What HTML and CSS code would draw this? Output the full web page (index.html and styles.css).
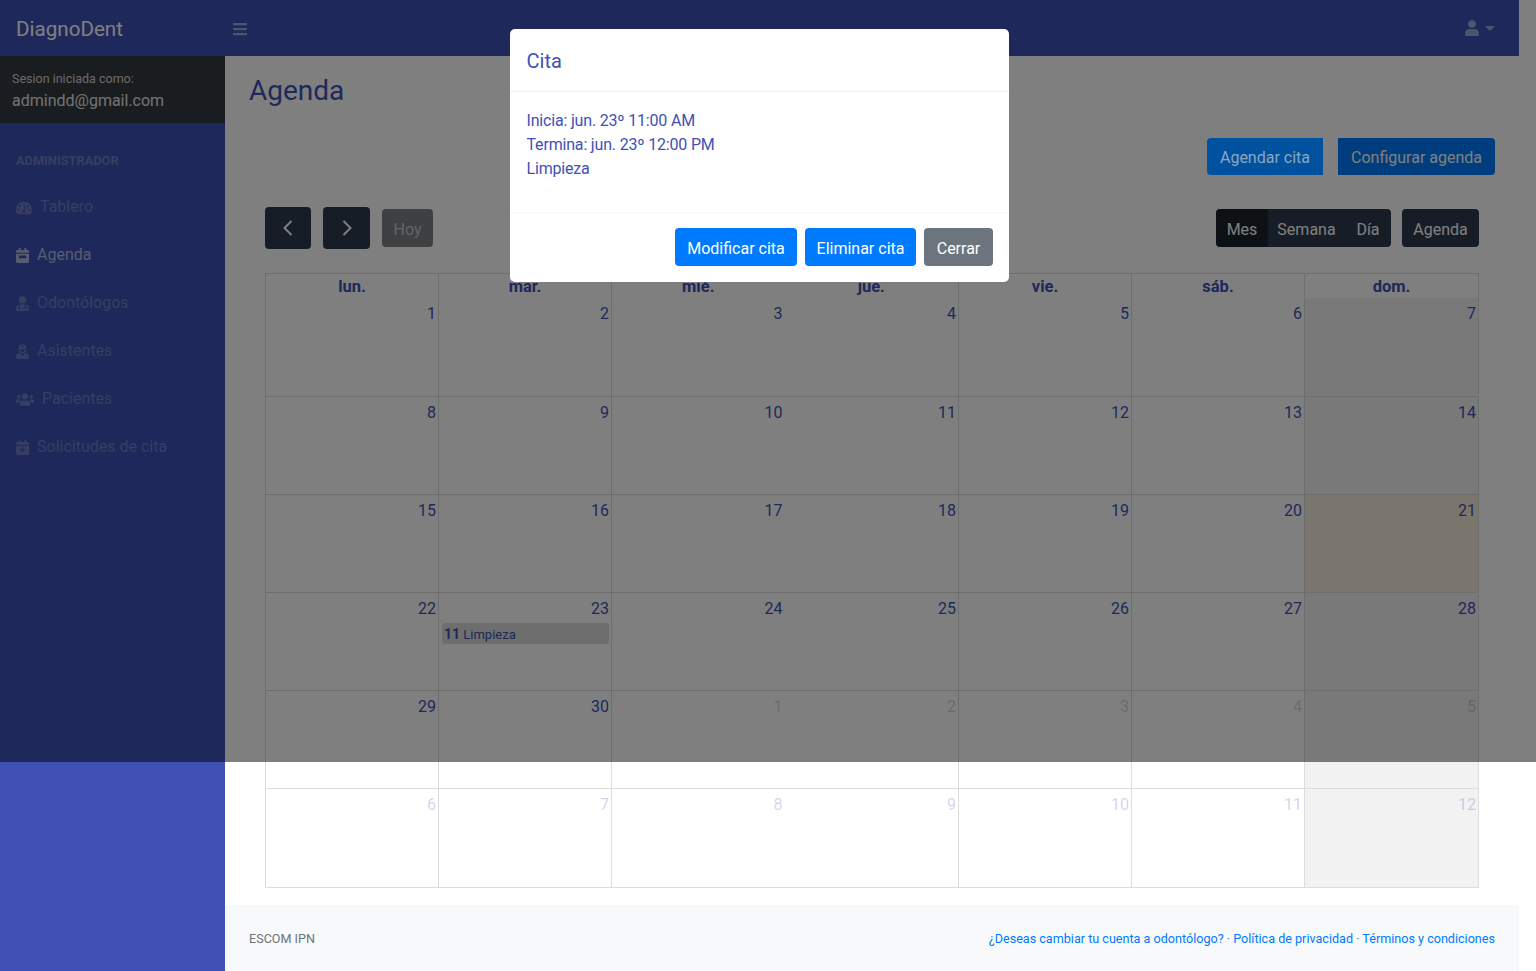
FILE: index.html
```html
<!DOCTYPE html>
<html lang="es">
<head>
  <meta charset="UTF-8" />
  <title>DiagnoDent - Agenda</title>
  <link rel="stylesheet" href="styles.css">
</head>
<body>
  <div class="page">
    <nav class="topnav">
      <a class="brand" href="#">DiagnoDent</a>
      <button class="menu-toggle">
        <svg class="icon" viewBox="0 0 448 512"><path d="M16 132h416c8.837 0 16-7.163 16-16V76c0-8.837-7.163-16-16-16H16C7.163 60 0 67.163 0 76v40c0 8.837 7.163 16 16 16zm0 160h416c8.837 0 16-7.163 16-16v-40c0-8.837-7.163-16-16-16H16c-8.837 0-16 7.163-16 16v40c0 8.837 7.163 16 16 16zm0 160h416c8.837 0 16-7.163 16-16v-40c0-8.837-7.163-16-16-16H16c-8.837 0-16 7.163-16 16v40c0 8.837 7.163 16 16 16z"/></svg>
      </button>
      <div class="user-menu">
        <svg class="icon" viewBox="0 0 448 512"><path d="M224 256c70.7 0 128-57.3 128-128S294.7 0 224 0 96 57.3 96 128s57.3 128 128 128zm89.6 32h-16.7c-22.2 10.2-46.9 16-72.9 16s-50.6-5.8-72.9-16h-16.7C60.2 288 0 348.2 0 422.4V464c0 26.5 21.5 48 48 48h352c26.5 0 48-21.5 48-48v-41.6c0-74.2-60.2-134.4-134.4-134.4z"/></svg>
        <span class="caret"></span>
      </div>
    </nav>

    <div class="layout">
      <aside class="sidebar">
        <div class="session">
          <div class="session-label">Sesion iniciada como:</div>
          <div class="session-mail">admindd@gmail.com</div>
        </div>
        <div class="side-heading">ADMINISTRADOR</div>
        <a class="side-link" href="#">
          <svg class="side-icon dial" viewBox="0 0 576 512"><path fill-rule="evenodd" d="M288 48C129 48 0 177 0 336c0 53 14 102 39 144 6 10 16 16 28 16h442c12 0 22-6 28-16 25-42 39-91 39-144C576 177 447 48 288 48zm0 64a32 32 0 1 1 0 64 32 32 0 0 1 0-64zM96 368a32 32 0 1 1 0-64 32 32 0 0 1 0 64zm48-128a32 32 0 1 1 0-64 32 32 0 0 1 0 64zm192 200H240c-6-8-16-40-6-60 8-16 26-26 42-24l52-150c3-8 12-13 21-10s13 12 10 20l-52 152c12 12 24 46 29 72zm96-200a32 32 0 1 1 0-64 32 32 0 0 1 0 64zm48 128a32 32 0 1 1 0-64 32 32 0 0 1 0 64z"/></svg>
          Tablero
        </a>
        <a class="side-link active" href="#">
          <svg class="side-icon" viewBox="0 0 448 512"><path fill-rule="evenodd" d="M12 192h424c6.6 0 12 5.4 12 12v260c0 26.5-21.5 48-48 48H48c-26.5 0-48-21.5-48-48V204c0-6.6 5.4-12 12-12zm84 64v96h256v-96zm352-108v-36c0-26.5-21.5-48-48-48h-48V12c0-6.6-5.4-12-12-12h-40c-6.6 0-12 5.4-12 12v52H160V12c0-6.6-5.4-12-12-12h-40c-6.6 0-12 5.4-12 12v52H48C21.5 64 0 85.5 0 112v36c0 6.6 5.4 12 12 12h424c6.6 0 12-5.4 12-12z"/></svg>
          Agenda
        </a>
        <a class="side-link" href="#">
          <svg class="side-icon" viewBox="0 0 448 512"><path fill-rule="evenodd" d="M224 256c70.7 0 128-57.3 128-128S294.7 0 224 0 96 57.3 96 128s57.3 128 128 128zM104 296C44 308 0 360 0 422v42c0 26.500 21.500 48 48 48h352c26.500 0 48-21.500 48-48v-42c0-62-44-114-104-126v60c28 8 48 32 48 62v34l-40 10-8-30 16-4v-10c0-18-14-32-32-32s-32 14-32 32v10l16 4-8 30-40-10v-34c0-30 20-54 48-62v-58c-16-2-32-4-48-4h-84c-16 0-32 2-48 4v86a40 40 0 1 1-32 0z"/></svg>
          Odontólogos
        </a>
        <a class="side-link" href="#">
          <svg class="side-icon" viewBox="0 0 448 512"><path fill-rule="evenodd" d="M96 64l128-64 128 64v128c0 70.700-57.300 128-128 128S96 262.700 96 192zm48 128c0 44 36 80 80 80s80-36 80-80v-16H144zm64-128v-24h32v24h24v32h-24v24h-32V96h-24V64zM110 320h34l80 96 80-96h34c62 0 110 48 110 108v36c0 26.500-21.500 48-48 48H48c-26.500 0-48-21.500-48-48v-36c0-60 48-108 110-108z"/></svg>
          Asistentes
        </a>
        <a class="side-link" href="#">
          <svg class="side-icon wide" viewBox="0 0 640 512"><path d="M96 224c35.300 0 64-28.700 64-64s-28.700-64-64-64-64 28.700-64 64 28.700 64 64 64zm448 0c35.300 0 64-28.700 64-64s-28.700-64-64-64-64 28.700-64 64 28.700 64 64 64zm32 32h-64c-17.600 0-33.500 7.100-45.100 18.600 40.300 22.100 68.900 62 75.100 109.400h66c17.700 0 32-14.300 32-32v-32c0-35.300-28.700-64-64-64zm-256 0c61.900 0 112-50.100 112-112S381.900 32 320 32 208 82.100 208 144s50.100 112 112 112zm76.800 32h-8.300c-20.800 10-43.900 16-68.500 16s-47.600-6-68.500-16h-8.300C179.600 288 128 339.600 128 403.200V432c0 26.500 21.500 48 48 48h288c26.500 0 48-21.500 48-48v-28.800c0-63.600-51.600-115.200-115.200-115.200zm-223.700-13.400C161.500 263.100 145.600 256 128 256H64c-35.300 0-64 28.700-64 64v32c0 17.700 14.300 32 32 32h65.900c6.300-47.400 34.900-87.300 75.200-109.400z"/></svg>
          Pacientes
        </a>
        <a class="side-link" href="#">
          <svg class="side-icon" viewBox="0 0 448 512"><path fill-rule="evenodd" d="M12 192h424c6.600 0 12 5.400 12 12v260c0 26.500-21.500 48-48 48H48c-26.500 0-48-21.500-48-48V204c0-6.600 5.400-12 12-12zm184 64v56h-56v48h56v56h56v-56h56v-48h-56v-56zm252-108v-36c0-26.500-21.500-48-48-48h-48V12c0-6.600-5.400-12-12-12h-40c-6.600 0-12 5.400-12 12v52H160V12c0-6.600-5.400-12-12-12h-40c-6.600 0-12 5.400-12 12v52H48C21.500 64 0 85.500 0 112v36c0 6.600 5.400 12 12 12h424c6.600 0 12-5.400 12-12z"/></svg>
          Solicitudes de cita
        </a>
      </aside>

      <div class="content">
        <main class="main">
          <h1 class="title">Agenda</h1>
          <div class="actions">
            <a class="btn action-one" href="#">Agendar cita</a>
            <a class="btn action-two" href="#">Configurar agenda</a>
          </div>

          <div class="calendar">
            <div class="toolbar">
              <div class="toolbar-left">
                <button class="btn btn-dark btn-arrow btn-prev">
                  <svg class="chevron" viewBox="0 0 12 18"><path d="M9.500 2 L2.500 9 L9.500 16"/></svg>
                </button>
                <button class="btn btn-dark btn-arrow">
                  <svg class="chevron" viewBox="0 0 12 18"><path d="M2.500 2 L9.500 9 L2.500 16"/></svg>
                </button>
                <button class="btn btn-today">Hoy</button>
              </div>
              <div class="toolbar-right">
                <div class="btn-group">
                  <button class="btn btn-dark view-mes">Mes</button>
                  <button class="btn btn-dark view-semana">Semana</button>
                  <button class="btn btn-dark view-dia">Día</button>
                </div>
                <button class="btn btn-dark view-agenda">Agenda</button>
              </div>
            </div>

            <table class="month">
              <thead>
                <tr>
                  <th>lun.</th><th>mar.</th><th class="no-right">mié.</th><th class="no-line">jue.</th><th>vie.</th><th>sáb.</th><th class="last-col">dom.</th>
                </tr>
              </thead>
              <tbody>
                <tr>
                  <td>1</td><td>2</td><td class="no-right">3</td><td class="no-line">4</td><td>5</td><td>6</td><td class="weekend">7</td>
                </tr>
                <tr>
                  <td>8</td><td>9</td><td class="no-right">10</td><td class="no-line">11</td><td>12</td><td>13</td><td class="weekend">14</td>
                </tr>
                <tr>
                  <td>15</td><td>16</td><td class="no-right">17</td><td class="no-line">18</td><td>19</td><td>20</td><td class="today">21</td>
                </tr>
                <tr>
                  <td>22</td>
                  <td>23<div class="event"><b>11</b> Limpieza</div></td>
                  <td class="no-right">24</td><td class="no-line">25</td><td>26</td><td>27</td><td class="weekend">28</td>
                </tr>
                <tr>
                  <td>29</td><td>30</td><td class="no-right off">1</td><td class="no-line off">2</td><td class="off">3</td><td class="off">4</td><td class="weekend off">5</td>
                </tr>
                <tr>
                  <td class="off">6</td><td class="off">7</td><td class="no-right off">8</td><td class="no-line off">9</td><td class="off">10</td><td class="off">11</td><td class="weekend off">12</td>
                </tr>
              </tbody>
            </table>
          </div>
        </main>

        <footer class="footer">
          <span class="footer-left">ESCOM IPN</span>
          <span class="footer-right">
            <a href="#">¿Deseas cambiar tu cuenta a odontólogo?</a> ·
            <a href="#">Política de privacidad</a> ·
            <a href="#">Términos y condiciones</a>
          </span>
        </footer>
      </div>
    </div>
  </div>

  <!-- Modal -->
  <div class="backdrop"></div>
  <div class="modal">
    <div class="modal-header">Cita</div>
    <div class="modal-body">
      <div>Inicia: jun. 23º 11:00 AM</div>
      <div>Termina: jun. 23º 12:00 PM</div>
      <div>Limpieza</div>
    </div>
    <div class="modal-footer">
      <button class="btn btn-primary btn-modify">Modificar cita</button>
      <button class="btn btn-primary btn-delete">Eliminar cita</button>
      <button class="btn btn-secondary">Cerrar</button>
    </div>
  </div>
</body>
</html>
```

FILE: styles.css
```css
* {
  box-sizing: border-box;
}
body {
  margin: 0;
  font-family: Roboto, "Open Sans", sans-serif;
  font-size: 16px;
  line-height: 24px;
  color: #3f51b5;
  background: #fff;
}
a {
  text-decoration: none;
}
.page {
  width: 1519px;
}
.icon {
  display: block;
  fill: currentColor;
}

/* Top bar */
.topnav {
  display: flex;
  align-items: center;
  height: 56px;
  background: #3f51b5;
}
.brand {
  width: 225px;
  padding: 2px 0 0 16px;
  font-size: 20.600px;
  color: #fff;
}
.menu-toggle {
  padding: 1px 0 0;
  margin-left: 8px;
  border: 0;
  background: none;
  color: rgba(255, 255, 255, 0.5);
}
.menu-toggle .icon {
  width: 14px;
  height: 16px;
}
.user-menu {
  display: flex;
  align-items: center;
  gap: 6px;
  margin-left: auto;
  margin-right: 24px;
  color: rgba(255, 255, 255, 0.5);
}
.user-menu .icon {
  width: 14px;
  height: 16px;
}
.caret {
  border-top: 5px solid;
  border-left: 5px solid transparent;
  border-right: 5px solid transparent;
}

/* Sidebar */
.layout {
  display: flex;
  min-height: 915px;
}
.sidebar {
  width: 225px;
  flex-shrink: 0;
  background: #3f51b5;
}
.session {
  height: 67px;
  padding: 14px 12px 0;
  background: #343a40;
  color: #e4e4e4;
}
.session-label {
  font-size: 12.500px;
  line-height: 17px;
  color: #d4d4d4;
}
.session-mail {
  margin-top: 2px;
  line-height: 24px;
}
.side-heading {
  padding: 29px 16px 0;
  height: 59px;
  font-size: 12.800px;
  line-height: 18px;
  font-weight: bold;
  color: rgba(255, 255, 255, 0.25);
}
.side-link {
  display: flex;
  align-items: center;
  gap: 8px;
  height: 48px;
  padding: 2px 0 0 16px;
  color: rgba(255, 255, 255, 0.25);
}
.side-link.active {
  color: rgba(255, 255, 255, 0.6);
}
.side-icon {
  width: 13px;
  height: 15px;
  fill: currentColor;
}
.side-icon.dial {
  width: 16px;
}
.side-icon.wide {
  width: 18px;
}

/* Main column */
.content {
  flex: 1;
  display: flex;
  flex-direction: column;
}
.main {
  flex: 1;
  padding: 0 24px;
}
.title {
  margin: 16px 0 0;
  font-size: 28px;
  line-height: 38px;
  font-weight: 400;
}
.actions {
  display: flex;
  justify-content: flex-end;
  gap: 15px;
  margin-top: 28px;
}
.btn {
  display: inline-block;
  height: 38px;
  padding: 4px 12px 0;
  font: inherit;
  border: 1px solid transparent;
  border-radius: 4px;
  color: #fff;
  cursor: pointer;
}
.actions .btn {
  height: 37px;
  padding-top: 7px;
}
/* sits over the backdrop: this button was caught mid hover fade */
.action-one {
  position: relative;
  z-index: 1;
  background: #0052a0;
  color: #8ba6bf;
  border-radius: 4px 0 0 4px;
}
.action-two {
  background: #007bff;
  border-radius: 0 4px 4px 0;
}

/* Calendar */
.calendar {
  padding: 0 16px;
}
.toolbar {
  display: flex;
  justify-content: space-between;
  align-items: center;
  height: 42px;
  margin-top: 32px;
}
.toolbar-left,
.toolbar-right {
  display: flex;
  align-items: center;
}
.toolbar-left {
  gap: 12px;
}
.toolbar-right {
  gap: 11px;
}
.btn-dark {
  background: #2d3b4d;
  padding: 4px 10px 0;
}
.btn-arrow {
  width: 47px;
  height: 42px;
  padding: 0;
  display: flex;
  align-items: center;
  justify-content: center;
}
.btn-prev {
  width: 46px;
}
.chevron {
  width: 12px;
  height: 18px;
  fill: none;
  stroke: #fff;
  stroke-width: 2;
}
.btn-today {
  width: 51px;
  padding: 4px 0 0;
  background: #7d8084;
  color: #c8c8c8;
}
.btn-group {
  display: flex;
}
.btn-group .btn {
  border-radius: 0;
  padding: 4px 0 0;
}
.view-mes {
  width: 52px;
  background: #1a2228;
}
.btn-group .view-mes {
  border-radius: 4px 0 0 4px;
}
.view-semana {
  width: 77px;
}
.view-dia {
  width: 46px;
}
.btn-group .view-dia {
  border-radius: 0 4px 4px 0;
}
.view-agenda {
  width: 77px;
  padding: 4px 0 0;
}
.month {
  width: 1214px;
  margin-top: 24px;
  border-collapse: collapse;
  table-layout: fixed;
}
.month th {
  width: 173px;
  height: 24px;
  padding: 2px 0 0;
  border: 1px solid #ddd;
  border-bottom: 0;
  font-size: 16.500px;
  line-height: 22px;
  font-weight: bold;
  text-align: center;
}
.month th.no-line {
  width: 174px;
}
.month th.last-col {
  width: auto;
}
.month td {
  height: 98px;
  padding: 3px 2px 0 3px;
  border: 1px solid #ddd;
  line-height: 26px;
  text-align: right;
  vertical-align: top;
}
.month .no-line {
  border-left: 0;
}
.month .no-right {
  border-right: 0;
}
.month tbody tr:first-child td {
  border-top: 0;
}
.month tbody tr:last-child td {
  height: 99px;
}
.month td.weekend {
  background: #f2f2f2;
}
.month td.today {
  background: #f5eddc;
}
.month td.off {
  color: rgba(63, 81, 181, 0.25);
}
.event {
  height: 21px;
  margin-top: 1px;
  padding: 1px 0 0 2px;
  background: #dcdcdc;
  border-radius: 3px;
  font-size: 13px;
  line-height: 20px;
  text-align: left;
}
.event b {
  font-size: 14px;
}

/* Footer */
.footer {
  display: flex;
  justify-content: space-between;
  align-items: center;
  height: 66px;
  margin-top: 17px;
  padding: 2px 24px 0;
  background: #f8f9fa;
  font-size: 12.600px;
}
.footer-left {
  color: #6c757d;
}
.footer-right {
  color: #6c757d;
}
.footer-right a {
  color: #007bff;
}

/* Modal */
.backdrop {
  position: absolute;
  top: 0;
  left: 0;
  width: 100%;
  height: 762px;
  background: rgba(0, 0, 0, 0.5);
}
.modal {
  position: absolute;
  top: 29px;
  left: 510px;
  width: 499px;
  height: 253px;
  z-index: 2;
  background: #fff;
  border-radius: 5px;
}
.modal-header {
  height: 63px;
  padding: 17px 16.500px 0;
  border-bottom: 1px solid #f1f1f1;
  font-size: 20px;
  line-height: 30px;
}
.modal-body {
  height: 120px;
  padding: 17px 16.500px 0;
  letter-spacing: -0.18px;
}
.modal-footer {
  display: flex;
  justify-content: flex-end;
  gap: 8px;
  padding: 15px 16px;
  border-top: 1px solid #f8f8f8;
}
.modal-footer .btn {
  padding: 4px 0 0;
}
.btn-primary {
  background: #007bff;
}
.btn-modify {
  width: 122px;
}
.btn-delete {
  width: 111px;
}
.btn-secondary {
  width: 69px;
  background: #6c757d;
}
```
